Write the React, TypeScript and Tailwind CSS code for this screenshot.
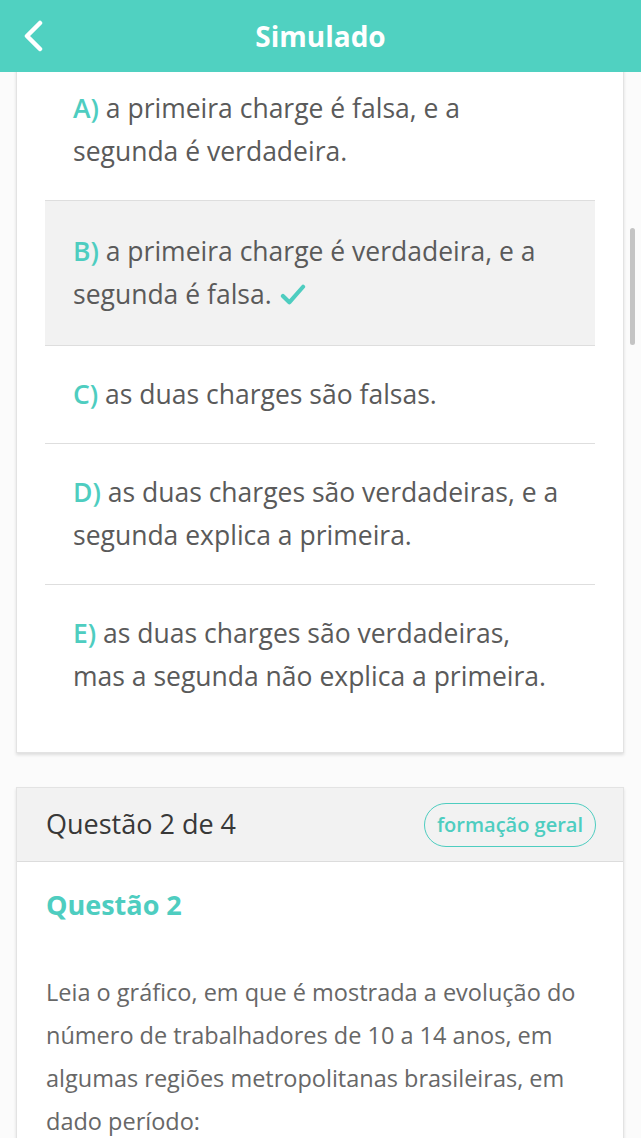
import React from "react";

const options = [
  { letter: "A)", text: "a primeira charge é falsa, e a segunda é verdadeira." },
  { letter: "B)", text: "a primeira charge é verdadeira, e a segunda é falsa.", correct: true },
  { letter: "C)", text: "as duas charges são falsas." },
  { letter: "D)", text: "as duas charges são verdadeiras, e a segunda explica a primeira." },
  { letter: "E)", text: "as duas charges são verdadeiras, mas a segunda não explica a primeira." },
];

const CheckMark = () => (
  <svg viewBox="0 0 28 24" className="ml-[8px] inline-block h-[22px] w-[26px] align-[-2px]">
    <path d="M3 13 L10 20 L25 3" fill="none" stroke="#4ecdc0" strokeWidth="4.5" strokeLinecap="round" strokeLinejoin="round" />
  </svg>
);

const App: React.FC = () => {
  return (
    <div
      className="relative flex h-[1138px] w-full flex-col overflow-hidden bg-[#fbfbfb]"
      style={{ fontFamily: '"Open Sans", "Noto Sans", sans-serif' }}
    >
      <div id="header" className="z-10 grid h-[72px] shrink-0 grid-cols-[1fr_auto_1fr] items-center bg-[#50d1c1]">
        <div className="pl-[22px]">
          <svg viewBox="0 0 22 32" className="h-[32px] w-[22px]">
            <path d="M18 3 L5 16 L18 29" fill="none" stroke="#ffffff" strokeWidth="4.5" strokeLinecap="round" strokeLinejoin="round" />
          </svg>
        </div>
        <h1 className="text-[28px] font-bold text-white">Simulado</h1>
        <div />
      </div>

      <div id="content" className="flex-1 overflow-hidden pl-[16px] pr-[17px]">
        <div className="-mt-[12px] border-x border-b border-[#e3e3e3] bg-white px-[28px] pb-[27px] shadow-[0_2px_3px_rgba(0,0,0,0.12)]">
          {options.map((o, i) => (
            <div
              key={o.letter}
              className={
                (i > 0 ? "border-t border-[#dedede] " : "") +
                (o.correct ? "bg-[#f2f2f2] py-[29px] " : "py-[27px] ") +
                "px-[28px] text-[26.5px] leading-[43px] text-[#5a5a5a]"
              }
            >
              <span className="font-semibold text-[#4ecdc0]">{o.letter}</span> {o.text}
              {o.correct && <CheckMark />}
            </div>
          ))}
        </div>

        <div className="mt-[34px] border border-[#e3e3e3] bg-white shadow-[0_2px_3px_rgba(0,0,0,0.12)]">
          <div className="flex h-[74px] items-center justify-between border-b border-[#dcdcdc] bg-[#f2f2f2] pl-[29px] pr-[27px]">
            <span className="text-[27px] text-[#383838]">Questão 2 de 4</span>
            <span className="flex h-[44px] items-center rounded-full border-[1.5px] border-[#4ecdc0] px-[12px] text-[20px] font-semibold text-[#4ecdc0]">
              formação geral
            </span>
          </div>
          <div className="px-[29px] pt-[25px] pb-[20px]">
            <h2 className="text-[27px] font-bold leading-[36px] text-[#4ecdc0]">Questão 2</h2>
            <p className="mt-[48px] text-[23.5px] leading-[43px] text-[#676767]">
              Leia o gráfico, em que é mostrada a evolução do número de trabalhadores de 10 a 14 anos, em algumas regiões
              metropolitanas brasileiras, em dado período:
            </p>
          </div>
        </div>
      </div>

      <div className="absolute right-[6px] top-[228px] h-[117px] w-[5px] rounded-full bg-[#c4c4c4]" />
    </div>
  );
};

export default App;
